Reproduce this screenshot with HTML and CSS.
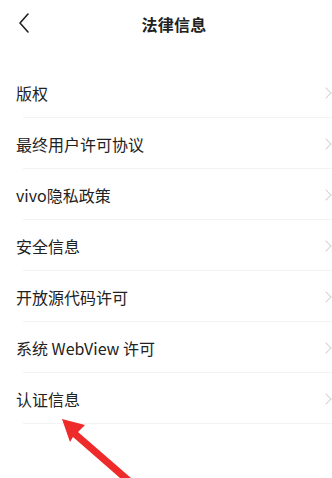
FILE: index.html
```
<!DOCTYPE html>
<html lang="zh">
<head>
<meta charset="utf-8">
<link rel="stylesheet" href="styles.css">
</head>
<body>
<div class="page">
  <header class="bar">
    <svg class="back" width="14" height="22" viewBox="0 0 14 22"><path d="M10 2 L2 11 L10 20" fill="none" stroke="#222" stroke-width="1.6" stroke-linecap="round" stroke-linejoin="round"/></svg>
    <div class="title">法律信息</div>
  </header>
  <ul class="list">
    <li class="row"><span>版权</span><i class="chev"></i></li>
    <li class="row"><span>最终用户许可协议</span><i class="chev"></i></li>
    <li class="row"><span>vivo隐私政策</span><i class="chev"></i></li>
    <li class="row"><span>安全信息</span><i class="chev"></i></li>
    <li class="row"><span>开放源代码许可</span><i class="chev"></i></li>
    <li class="row"><span>系统 WebView 许可</span><i class="chev"></i></li>
    <li class="row"><span>认证信息</span><i class="chev"></i></li>
  </ul>
  <svg class="arrow" width="100" height="70" viewBox="0 0 100 70">
    <polygon points="22,9 45,15 38,22 91,68 80,68 33,27 30,32" fill="#ee2a2a"/>
  </svg>
</div>
</body>
</html>
```
FILE: styles.css
```
html, body { margin: 0; padding: 0; background: #fff; }
.page {
  position: relative;
  width: 332px;
  height: 478px;
  overflow: hidden;
  font-family: "Noto Sans CJK SC", "Noto Sans", sans-serif;
  color: #222;
}
.bar {
  position: relative;
  height: 48px;
  display: flex;
  align-items: center;
  justify-content: center;
  padding-left: 16px;
}
.back { position: absolute; left: 18px; top: 12px; }
.title { font-size: 16px; font-weight: 700; letter-spacing: 0.3px; }
.list { list-style: none; margin: 19px 0 0 0; padding: 0; }
.row {
  position: relative;
  height: 51px;
  box-sizing: border-box;
  display: flex;
  align-items: center;
  justify-content: space-between;
  padding: 0 0 0 16px;
  font-size: 16px;
}
.row::after {
  content: "";
  position: absolute;
  left: 23px; right: 0; bottom: 0;
  height: 1px;
  background: #f3f3f3;
}
.chev {
  width: 7px; height: 7px;
  border-top: 1.2px solid #d4d4d4;
  border-right: 1.2px solid #d4d4d4;
  transform: rotate(45deg);
  margin-right: 2px;
}
.arrow { position: absolute; left: 40px; top: 410px; }
```
